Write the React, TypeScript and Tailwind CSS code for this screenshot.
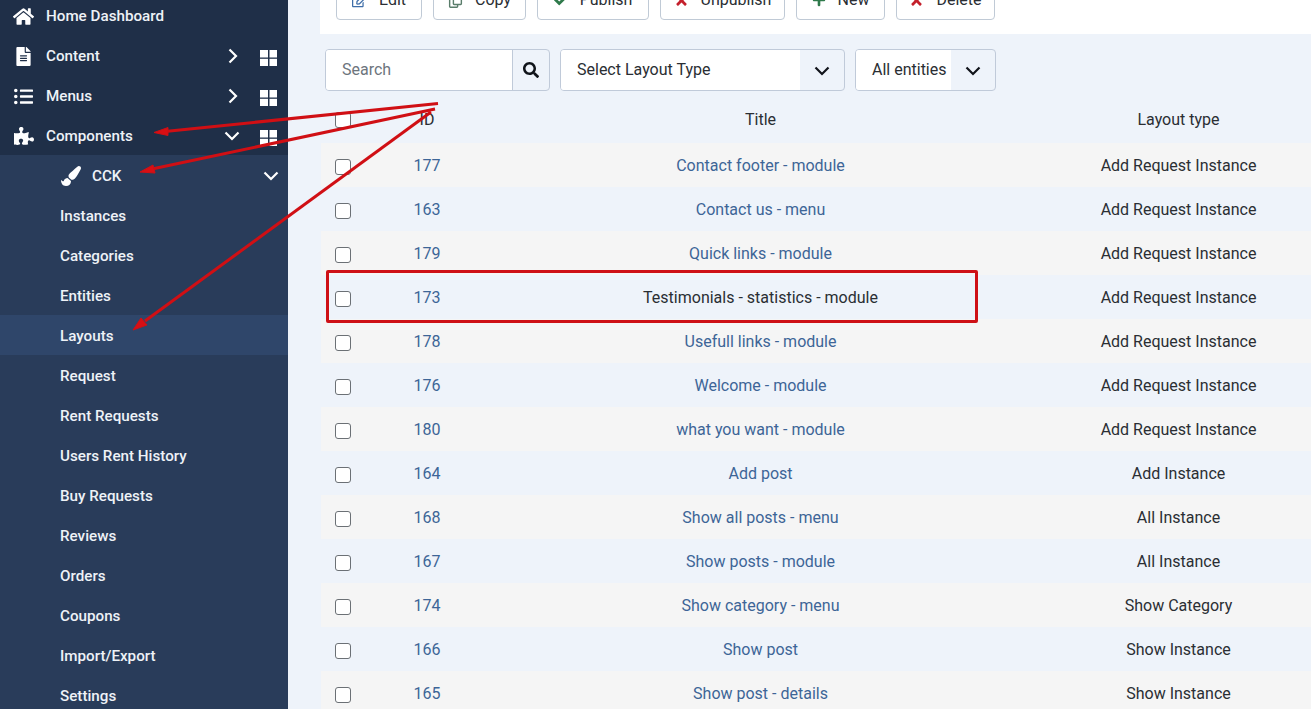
import { FaCheck, FaFileAlt, FaHome, FaListUl, FaPaintBrush, FaPlus, FaPuzzlePiece, FaRegCopy, FaRegEdit, FaSearch, FaTimes } from "react-icons/fa";
import type { ReactNode } from "react";

const topItems = [
  { label: "Home Dashboard", icon: <FaHome size={21} /> },
  { label: "Content", icon: <FaFileAlt size={19} />, chevron: "right" },
  { label: "Menus", icon: <FaListUl size={19} />, chevron: "right" },
  { label: "Components", icon: <FaPuzzlePiece size={20} />, chevron: "down" },
];

const subItems = ["Instances", "Categories", "Entities", "Layouts", "Request", "Rent Requests", "Users Rent History", "Buy Requests", "Reviews", "Orders", "Coupons", "Import/Export", "Settings"];

const rows = [
  ["177", "Contact footer - module", "Add Request Instance"],
  ["163", "Contact us - menu", "Add Request Instance"],
  ["179", "Quick links - module", "Add Request Instance"],
  ["173", "Testimonials - statistics - module", "Add Request Instance"],
  ["178", "Usefull links - module", "Add Request Instance"],
  ["176", "Welcome - module", "Add Request Instance"],
  ["180", "what you want - module", "Add Request Instance"],
  ["164", "Add post", "Add Instance"],
  ["168", "Show all posts - menu", "All Instance"],
  ["167", "Show posts - module", "All Instance"],
  ["174", "Show category - menu", "Show Category"],
  ["166", "Show post", "Show Instance"],
  ["165", "Show post - details", "Show Instance"],
];

function ChevronDown({ className }: { className?: string }) {
  return (
    <svg width="16" height="10" viewBox="0 0 16 10" fill="none" stroke="currentColor" strokeWidth="2.2" className={className}>
      <polyline points="1.5,1.5 8,8 14.5,1.5" />
    </svg>
  );
}

function ChevronRight({ className }: { className?: string }) {
  return (
    <svg width="10" height="16" viewBox="0 0 10 16" fill="none" stroke="currentColor" strokeWidth="2.2" className={className}>
      <polyline points="1.5,1.5 8,8 1.5,14.5" />
    </svg>
  );
}

function GridIcon() {
  return (
    <svg width="17" height="16" viewBox="0 0 17 16" fill="currentColor" className="mt-[3px] mr-[11px] text-white">
      <rect x="0" y="0" width="8" height="7.5" />
      <rect x="9.5" y="0" width="7.5" height="7.5" />
      <rect x="0" y="8.8" width="8" height="7.2" />
      <rect x="9.5" y="8.8" width="7.5" height="7.2" />
    </svg>
  );
}

function Sidebar() {
  return (
    <aside className="w-[288px] shrink-0 -mt-[5px] bg-[#1f2f48] text-[15.2px] font-medium text-[#eef2f7]">
      {topItems.map((item) => (
        <div key={item.label} className="flex h-10 items-center pt-[2px]">
          <span className="flex w-[46px] shrink-0 justify-center pl-[1px] text-white">{item.icon}</span>
          <span className="flex-1">{item.label}</span>
          {item.chevron === "right" && <ChevronRight className="mr-[22px] text-white" />}
          {item.chevron === "down" && <ChevronDown className="mr-[20px] text-white" />}
          {item.chevron && <GridIcon />}
        </div>
      ))}
      <div className="bg-[#293c5a]">
        <div className="flex h-10 items-center pt-[2px]">
          <FaPaintBrush size={20} className="ml-[61px] mr-[11px] text-white" />
          <span className="flex-1">CCK</span>
          <ChevronDown className="mr-[9px] text-white" />
        </div>
        {subItems.map((label) => (
          <div key={label} className={`flex h-10 items-center pt-[2px] pl-[60px] ${label === "Layouts" ? "bg-[#2f466a]" : ""}`}>
            {label}
          </div>
        ))}
      </div>
    </aside>
  );
}

function ToolButton({ icon, label, width }: { icon: ReactNode; label: string; width: string }) {
  return (
    <div className={`flex h-10 items-center justify-center gap-[12px] rounded border border-[#c0cad6] bg-white text-[#2a2e33] ${width}`}>
      {icon}
      <span>{label}</span>
    </div>
  );
}

function Toolbar() {
  return (
    <div className="-mt-[20px] flex gap-[11px] bg-white pr-4 pb-[14px] pl-[16px]">
      <ToolButton width="w-[86px]" icon={<FaRegEdit size={15} className="text-[#3f6ea8]" />} label="Edit" />
      <ToolButton width="w-[93px]" icon={<FaRegCopy size={15} className="text-[#5a7d6b]" />} label="Copy" />
      <ToolButton width="w-[112px]" icon={<FaCheck size={14} className="text-[#2f7a4b]" />} label="Publish" />
      <ToolButton width="w-[125px]" icon={<FaTimes size={15} className="text-[#c4202c]" />} label="Unpublish" />
      <ToolButton width="w-[89px]" icon={<FaPlus size={14} className="text-[#2f7a4b]" />} label="New" />
      <ToolButton width="w-[99px]" icon={<FaTimes size={15} className="text-[#c4202c]" />} label="Delete" />
    </div>
  );
}

function Filters() {
  return (
    <div className="mt-[15px] ml-[5px] flex h-[42px] gap-[10px]">
      <div className="flex w-[225px] overflow-hidden rounded border border-[#c0cad9]">
        <div className="flex flex-1 items-center bg-white pl-4 text-[#6d757d]">Search</div>
        <div className="flex w-[37px] items-center justify-center border-l border-[#c0cad9] text-[#10141a]">
          <FaSearch size={16} />
        </div>
      </div>
      <div className="flex w-[285px] overflow-hidden rounded border border-[#c0cad9]">
        <div className="flex flex-1 items-center bg-white pl-4 text-[#2a2e33]">Select Layout Type</div>
        <div className="flex w-[44px] items-center justify-center pt-[2px] text-[#10141a]">
          <ChevronDown />
        </div>
      </div>
      <div className="flex w-[141px] overflow-hidden rounded border border-[#c0cad9]">
        <div className="flex flex-1 items-center bg-white pl-4 text-[#2a2e33]">All entities</div>
        <div className="flex w-[44px] items-center justify-center pt-[2px] text-[#10141a]">
          <ChevronDown />
        </div>
      </div>
    </div>
  );
}

function Checkbox({ className }: { className?: string }) {
  return <span className={`block h-4 w-4 rounded-[3px] border border-[#6b7075] bg-white ${className ?? ""}`} />;
}

function Table() {
  return (
    <div className="mt-[6px] ml-px w-[1004px] text-center text-[#2a2e33]">
      <div className="grid h-[46px] grid-cols-[44px_124px_543px_293px] items-center">
        <div className="flex justify-center"><Checkbox /></div>
        <div>ID</div>
        <div>Title</div>
        <div>Layout type</div>
      </div>
      {rows.map(([id, title, type], i) => (
        <div key={id} className={`grid h-11 grid-cols-[44px_124px_543px_293px] items-center pt-[2px] ${i % 2 === 0 ? "bg-[#f5f5f5]" : "bg-[#eef3fa]"}`}>
          <div className="flex justify-center"><Checkbox className="mt-px" /></div>
          <div className="text-[#3d6597]">{id}</div>
          <div className={id === "173" ? "text-[#2a2e33]" : "text-[#3d6597]"}>{title}</div>
          <div>{type}</div>
        </div>
      ))}
    </div>
  );
}

function Annotations() {
  return (
    <>
      <div className="absolute top-[270px] left-[326px] h-[53px] w-[652px] rounded-[2px] border-[3px] border-[#ce1016]" />
      <svg className="absolute top-0 left-0" width="1311" height="709" fill="#d80f14" stroke="#d00f14">
        <line x1="438" y1="103.5" x2="165" y2="131.5" strokeWidth="3" />
        <polygon points="154,132.5 168,127.5 168,135.5" strokeWidth="1" />
        <line x1="435" y1="109" x2="152" y2="169" strokeWidth="3" />
        <polygon points="140,172 153,165 155,173" strokeWidth="1" />
        <line x1="431" y1="112" x2="145" y2="321" strokeWidth="3" />
        <polygon points="133,330 141,318 147,325" strokeWidth="1" />
      </svg>
    </>
  );
}

export default function App() {
  return (
    <div className="relative flex h-[709px] overflow-hidden bg-[#eef3fa] font-['Roboto',sans-serif] text-base">
      <Sidebar />
      <main className="min-w-0 flex-1 pl-[32px]">
        <Toolbar />
        <Filters />
        <Table />
      </main>
      <Annotations />
    </div>
  );
}
